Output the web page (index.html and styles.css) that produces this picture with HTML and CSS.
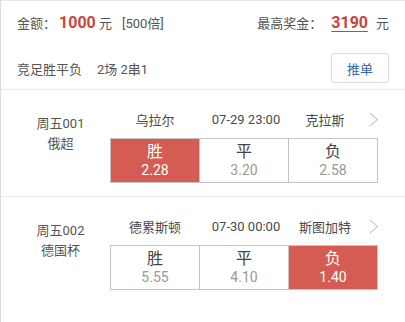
FILE: index.html
```html
<!DOCTYPE html>
<html lang="zh-CN">
<head>
    <meta charset="UTF-8">
    <meta name="viewport" content="width=device-width, initial-scale=1.0">
    <title>投注详情</title>
    <link rel="stylesheet" href="styles.css">
</head>
<body>
    <div class="page">
        <div class="summary">
            <div class="summary-row">
                <div class="amount">金额：<b class="num">1000</b> 元<span class="multiple">[500倍]</span></div>
                <div class="prize">最高奖金：<b class="num prize-num">3190</b>元</div>
            </div>
            <div class="summary-row play-row">
                <div>竞足胜平负<span class="plays">2场 2串1</span></div>
                <button class="push-btn">推单</button>
            </div>
        </div>

        <div class="match">
            <div class="match-info">
                <div>周五001</div>
                <div>俄超</div>
            </div>
            <div class="match-main">
                <div class="teams">
                    <span>乌拉尔</span>
                    <span>07-29 23:00</span>
                    <span>克拉斯</span>
                    <svg class="arrow" width="10" height="15" viewBox="0 0 10 15"><polyline points="1,1 8.5,7.5 1,14" fill="none" stroke="#b0b0b0" stroke-width="1"/></svg>
                </div>
                <div class="odds">
                    <div class="odd selected"><div class="odd-label">胜</div><div class="odd-value">2.28</div></div>
                    <div class="odd"><div class="odd-label">平</div><div class="odd-value">3.20</div></div>
                    <div class="odd"><div class="odd-label">负</div><div class="odd-value">2.58</div></div>
                </div>
            </div>
        </div>

        <div class="match">
            <div class="match-info">
                <div>周五002</div>
                <div>德国杯</div>
            </div>
            <div class="match-main">
                <div class="teams">
                    <span>德累斯顿</span>
                    <span>07-30 00:00</span>
                    <span>斯图加特</span>
                    <svg class="arrow" width="10" height="15" viewBox="0 0 10 15"><polyline points="1,1 8.5,7.5 1,14" fill="none" stroke="#b0b0b0" stroke-width="1"/></svg>
                </div>
                <div class="odds">
                    <div class="odd"><div class="odd-label">胜</div><div class="odd-value">5.55</div></div>
                    <div class="odd"><div class="odd-label">平</div><div class="odd-value">4.10</div></div>
                    <div class="odd selected"><div class="odd-label">负</div><div class="odd-value">1.40</div></div>
                </div>
            </div>
        </div>
    </div>
</body>
</html>
```

FILE: styles.css
```css
body {
    margin: 0;
    background: #fff;
    font-family: Roboto, "Noto Sans CJK SC", sans-serif;
    font-size: 13px;
    color: #555;
}
.page {
    height: 322px;
    box-sizing: border-box;
    border-top: 1px solid #e8e8e8;
    border-left: 1px solid #dcdcdc;
}
.summary {
    padding: 0 16px 0 16px;
    border-bottom: 1px solid #e8e8e8;
}
.summary-row {
    display: flex;
    align-items: center;
    justify-content: space-between;
    height: 42px;
}
.play-row {
    height: 42px;
    padding-top: 4px;
}
.num {
    font-size: 16px;
    font-weight: bold;
    color: #c9453b;
    margin-left: 3px;
}
.multiple {
    margin-left: 10px;
}
.prize-num {
    margin: 0 8px 0 9px;
    text-decoration: underline;
    text-underline-offset: 3px;
}
.plays {
    margin-left: 15px;
}
.push-btn {
    width: 58px;
    height: 30px;
    padding: 0;
    border: 1px solid #dcdcdc;
    border-radius: 3px;
    background: #fff;
    color: #3a6aa6;
    font-family: inherit;
    font-size: 13px;
}
.match {
    display: flex;
    padding: 20px 0 13px 10px;
    border-bottom: 1px solid #ececec;
}
.match:last-child {
    border-bottom: none;
}
.match-info {
    width: 99px;
    padding-top: 4px;
    text-align: center;
    line-height: 20px;
}
.teams {
    display: grid;
    grid-template-columns: 90px 92px 66px 1fr;
    align-items: center;
    height: 18px;
    margin-bottom: 10px;
    text-align: center;
    color: #4a4a4a;
}
.arrow {
    margin-left: 11px;
}
.odds {
    display: flex;
    width: 268px;
    border: 1px solid #c4c4c4;
    box-sizing: border-box;
}
.odd {
    flex: 1;
    padding: 4px 0 3px;
    text-align: center;
}
.odd + .odd {
    border-left: 1px solid #c4c4c4;
}
.odd-label {
    font-size: 16px;
    line-height: 18px;
    color: #444;
}
.odd-value {
    font-size: 14px;
    line-height: 18px;
    color: #999;
}
.odd.selected {
    background: #d45c52;
}
.odd.selected .odd-label,
.odd.selected .odd-value {
    color: #fff;
}
```
